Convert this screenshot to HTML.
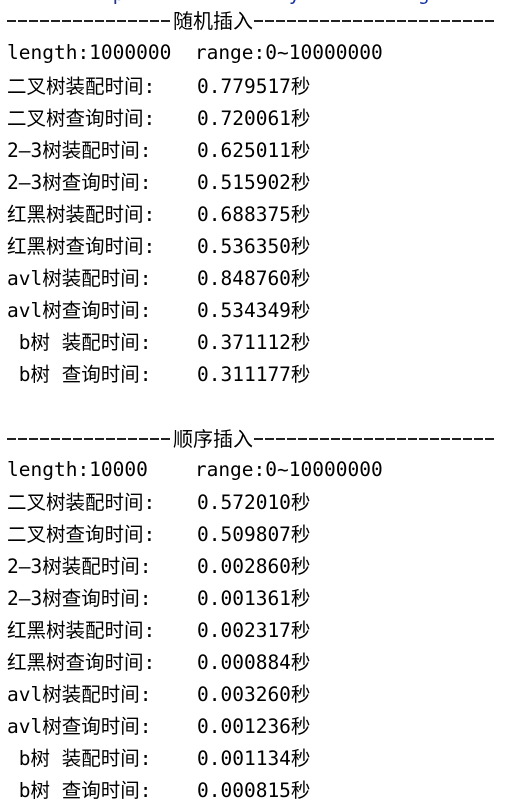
<!DOCTYPE html>
<html><head><meta charset="utf-8"><style>
body{margin:0;width:516px;height:810px;background:#fff;overflow:hidden;position:relative;font-family:"DejaVu Sans Mono","Liberation Mono","Noto Sans CJK SC",monospace;font-size:19.5px;color:#000}
.l{position:absolute;left:7px;white-space:pre;line-height:24px;height:24px}
.v{position:absolute;left:197px;white-space:pre;line-height:24px}
.blue{color:#1a33a0}
.d{position:absolute;height:1.6px;background:repeating-linear-gradient(to right,#222 0 9px,transparent 9px 11px)}
.h{position:absolute;left:173px;line-height:24px;font-family:"Noto Sans CJK SC",sans-serif;font-size:20px}
</style></head><body>
<div class="l blue" style="top:-18px">         p              y          g</div>
<div class="d" style="left:7px;width:165px;top:20px"></div>
<div class="h" style="top:8px">随机插入</div>
<div class="d" style="left:254px;width:240px;top:20px"></div>
<div class="l" style="top:41px">length:1000000  range:0~10000000</div>
<div class="l" style="top:75px">二叉树装配时间:</div><div class="v" style="top:75px">0.779517秒</div>
<div class="l" style="top:107px">二叉树查询时间:</div><div class="v" style="top:107px">0.720061秒</div>
<div class="l" style="top:139px">2–3树装配时间:</div><div class="v" style="top:139px">0.625011秒</div>
<div class="l" style="top:171px">2–3树查询时间:</div><div class="v" style="top:171px">0.515902秒</div>
<div class="l" style="top:203px">红黑树装配时间:</div><div class="v" style="top:203px">0.688375秒</div>
<div class="l" style="top:235px">红黑树查询时间:</div><div class="v" style="top:235px">0.536350秒</div>
<div class="l" style="top:267px">avl树装配时间:</div><div class="v" style="top:267px">0.848760秒</div>
<div class="l" style="top:299px">avl树查询时间:</div><div class="v" style="top:299px">0.534349秒</div>
<div class="l" style="top:331px"> b树 装配时间:</div><div class="v" style="top:331px">0.371112秒</div>
<div class="l" style="top:363px"> b树 查询时间:</div><div class="v" style="top:363px">0.311177秒</div>
<div class="d" style="left:7px;width:165px;top:438px"></div>
<div class="h" style="top:426px">顺序插入</div>
<div class="d" style="left:254px;width:240px;top:438px"></div>
<div class="l" style="top:458px">length:10000    range:0~10000000</div>
<div class="l" style="top:491px">二叉树装配时间:</div><div class="v" style="top:491px">0.572010秒</div>
<div class="l" style="top:523px">二叉树查询时间:</div><div class="v" style="top:523px">0.509807秒</div>
<div class="l" style="top:555px">2–3树装配时间:</div><div class="v" style="top:555px">0.002860秒</div>
<div class="l" style="top:587px">2–3树查询时间:</div><div class="v" style="top:587px">0.001361秒</div>
<div class="l" style="top:619px">红黑树装配时间:</div><div class="v" style="top:619px">0.002317秒</div>
<div class="l" style="top:651px">红黑树查询时间:</div><div class="v" style="top:651px">0.000884秒</div>
<div class="l" style="top:683px">avl树装配时间:</div><div class="v" style="top:683px">0.003260秒</div>
<div class="l" style="top:715px">avl树查询时间:</div><div class="v" style="top:715px">0.001236秒</div>
<div class="l" style="top:747px"> b树 装配时间:</div><div class="v" style="top:747px">0.001134秒</div>
<div class="l" style="top:779px"> b树 查询时间:</div><div class="v" style="top:779px">0.000815秒</div>
</body></html>
